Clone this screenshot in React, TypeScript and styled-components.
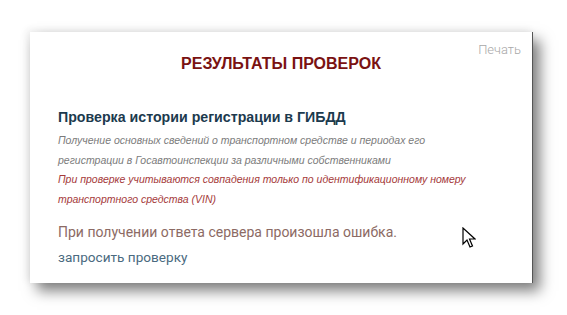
import styled, { createGlobalStyle } from "styled-components";

const GlobalStyle = createGlobalStyle`
  html, body {
    margin: 0;
    padding: 0;
    background: #ffffff;
  }
  body {
    width: 567px;
    height: 315px;
    overflow: hidden;
  }
`;

const Page = styled.div`
  position: relative;
  width: 567px;
  height: 315px;
  padding: 32px 0 0 30px;
  box-sizing: border-box;
`;

const Card = styled.div`
  position: relative;
  width: 503px;
  height: 251px;
  box-sizing: border-box;
  background: #ffffff;
  border-right: 1px solid #555;
  box-shadow: 7px 8px 13px rgba(0, 0, 0, 0.5), -3px -2px 8px rgba(0, 0, 0, 0.08);
  padding: 0 12px 0 28px;
  display: flex;
  flex-direction: column;
`;

const PrintLink = styled.a`
  position: absolute;
  top: 10px;
  right: 11px;
  font-family: Roboto, "Liberation Sans", sans-serif;
  font-weight: 300;
  font-size: 13px;
  color: #a8a8a8;
  text-decoration: none;
`;

const Title = styled.h2`
  margin: 23px 0 0 -16px;
  font-family: "Liberation Sans", Arial, sans-serif;
  font-weight: bold;
  font-size: 16px;
  color: #7a1212;
  text-align: center;
`;

const Section = styled.div`
  margin-top: 36px;
  display: flex;
  flex-direction: column;
`;

const SectionTitle = styled.h3`
  margin: 0 0 6px;
  font-family: "Liberation Sans", Arial, sans-serif;
  font-weight: bold;
  font-size: 14.2px;
  color: #1c3a4e;
`;

const Note = styled.p<{ $warn?: boolean }>`
  margin: 0;
  font-family: "Liberation Sans", Arial, sans-serif;
  font-style: italic;
  font-size: 10.5px;
  line-height: 19.7px;
  color: ${(p) => (p.$warn ? "#a53a3a" : "#7b7b7b")};
`;

const ErrorText = styled.p`
  margin: 14px 0 0;
  font-family: Roboto, "Liberation Sans", sans-serif;
  font-weight: 400;
  font-size: 14px;
  color: #8c6a64;
`;

const RequestLink = styled.a`
  margin-top: 9px;
  font-family: Roboto, "Liberation Sans", sans-serif;
  font-size: 13.6px;
  color: #4a6a80;
  text-decoration: none;
`;

const Cursor = styled.svg`
  position: absolute;
  left: 462px;
  top: 227px;
`;

export default function App() {
  return (
    <>
      <GlobalStyle />
      <Page>
        <Card>
          <PrintLink href="#">Печать</PrintLink>
          <Title>РЕЗУЛЬТАТЫ ПРОВЕРОК</Title>
          <Section>
            <SectionTitle>Проверка истории регистрации в ГИБДД</SectionTitle>
            <Note>
              Получение основных сведений о транспортном средстве и периодах его
              <br />
              регистрации в Госавтоинспекции за различными собственниками
            </Note>
            <Note $warn>
              При проверке учитываются совпадения только по идентификационному номеру
              <br />
              транспортного средства (VIN)
            </Note>
            <ErrorText>При получении ответа сервера произошла ошибка.</ErrorText>
            <RequestLink href="#">запросить проверку</RequestLink>
          </Section>
        </Card>
        <Cursor width="14" height="22" viewBox="0 0 14 22">
          <path
            d="M1 1 L1 17 L5 13 L8 20 L10.5 19 L7.5 12 L13 12 Z"
            fill="#ffffff"
            stroke="#000000"
            strokeWidth="1.2"
          />
        </Cursor>
      </Page>
    </>
  );
}
